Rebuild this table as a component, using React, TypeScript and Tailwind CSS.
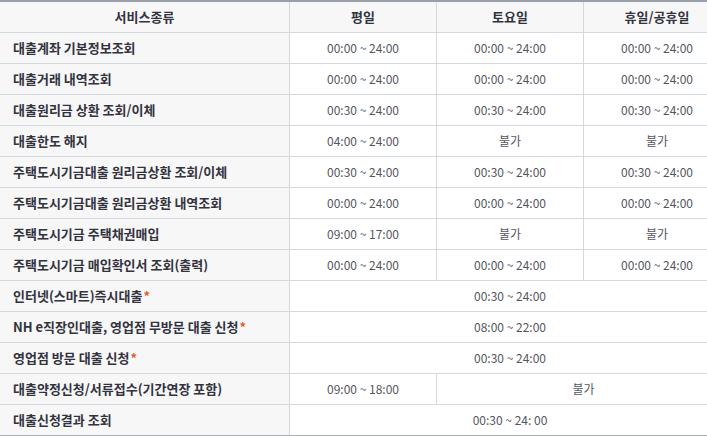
import React from "react";

type Row = { name: string; star?: boolean; cells: { text: string; span?: 1 | 2 | 3 }[] };

const rows: Row[] = [
  { name: "대출계좌 기본정보조회", cells: [{ text: "00:00 ~ 24:00" }, { text: "00:00 ~ 24:00" }, { text: "00:00 ~ 24:00" }] },
  { name: "대출거래 내역조회", cells: [{ text: "00:00 ~ 24:00" }, { text: "00:00 ~ 24:00" }, { text: "00:00 ~ 24:00" }] },
  { name: "대출원리금 상환 조회/이체", cells: [{ text: "00:30 ~ 24:00" }, { text: "00:30 ~ 24:00" }, { text: "00:30 ~ 24:00" }] },
  { name: "대출한도 해지", cells: [{ text: "04:00 ~ 24:00" }, { text: "불가" }, { text: "불가" }] },
  { name: "주택도시기금대출 원리금상환 조회/이체", cells: [{ text: "00:30 ~ 24:00" }, { text: "00:30 ~ 24:00" }, { text: "00:30 ~ 24:00" }] },
  { name: "주택도시기금대출 원리금상환 내역조회", cells: [{ text: "00:00 ~ 24:00" }, { text: "00:00 ~ 24:00" }, { text: "00:00 ~ 24:00" }] },
  { name: "주택도시기금 주택채권매입", cells: [{ text: "09:00 ~ 17:00" }, { text: "불가" }, { text: "불가" }] },
  { name: "주택도시기금 매입확인서 조회(출력)", cells: [{ text: "00:00 ~ 24:00" }, { text: "00:00 ~ 24:00" }, { text: "00:00 ~ 24:00" }] },
  { name: "인터넷(스마트)즉시대출", star: true, cells: [{ text: "00:30 ~ 24:00", span: 3 }] },
  { name: "NH e직장인대출, 영업점 무방문 대출 신청", star: true, cells: [{ text: "08:00 ~ 22:00", span: 3 }] },
  { name: "영업점 방문 대출 신청", star: true, cells: [{ text: "00:30 ~ 24:00", span: 3 }] },
  { name: "대출약정신청/서류접수(기간연장 포함)", cells: [{ text: "09:00 ~ 18:00" }, { text: "불가", span: 2 }] },
  { name: "대출신청결과 조회", cells: [{ text: "00:30 ~ 24: 00", span: 3 }] },
];

const font = { fontFamily: '"Noto Sans CJK KR", "Noto Sans", sans-serif' };

export default function App() {
  return (
    <div className="w-[707px] h-[436px] overflow-hidden bg-white" style={font}>
      <div className="w-[731px] border-t-2 border-[#9aa0aa] grid grid-cols-[290px_147px_147px_147px]">
        {["서비스종류", "평일", "토요일", "휴일/공휴일"].map((h) => (
          <div
            key={h}
            className="h-[31px] flex items-center justify-center bg-[#f7f7f7] border-r border-b border-[#d3d7de] text-[13px] font-bold text-[#333340]"
          >
            {h}
          </div>
        ))}
        {rows.map((r, i) => {
          const last = i === rows.length - 1;
          const bb = last ? "border-b-[#a9adb5]" : "";
          return (
            <React.Fragment key={r.name}>
              <div
                className={`h-[31px] flex items-center pl-[13px] bg-[#f7f7f7] border-r border-b border-[#d3d7de] ${bb} text-[13px] font-bold text-[#333340] whitespace-nowrap`}
              >
                {r.name}
                {r.star && <span className="text-[#e8572e] ml-[1px]">*</span>}
              </div>
              {r.cells.map((c, j) => (
                <div
                  key={j}
                  className={`h-[31px] flex items-center justify-center bg-white border-r border-b border-[#d3d7de] ${bb} text-[12px] text-[#555560] whitespace-pre ${
                    c.span === 3 ? "col-span-3" : c.span === 2 ? "col-span-2" : ""
                  }`}
                >
                  {c.text}
                </div>
              ))}
            </React.Fragment>
          );
        })}
      </div>
    </div>
  );
}
